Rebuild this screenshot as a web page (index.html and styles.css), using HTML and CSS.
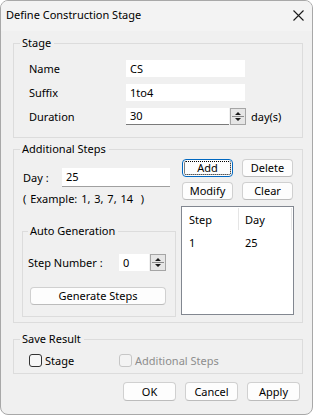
FILE: index.html
```html
<!DOCTYPE html>
<html lang="en">
<head>
  <meta charset="UTF-8" />
  <title>Define Construction Stage</title>
  <link rel="stylesheet" href="styles.css">
</head>
<body>
  <div class="window">
    <div class="titlebar">
      <span class="title">Define Construction Stage</span>
      <svg class="close" width="11" height="11" viewBox="0 0 11 11">
        <path d="M0.5 0.5 L10.5 10.5 M10.5 0.5 L0.5 10.5" stroke="#1a1a1a" stroke-width="1.1" fill="none"/>
      </svg>
    </div>

    <div class="content">
      <fieldset class="group">
        <legend>Stage</legend>
        <div class="stage-body">
          <div class="row"><span class="label">Name</span><span class="edit wide">CS</span></div>
          <div class="row"><span class="label">Suffix</span><span class="edit wide">1to4</span></div>
          <div class="row">
            <span class="label">Duration</span>
            <span class="edit spin-edit">30</span>
            <span class="spinner">
              <svg width="16" height="17" viewBox="0 0 16 17">
                <path d="M5 7 L8 4 L11 7 Z M5 10 L8 13 L11 10 Z" fill="#1a1a1a"/>
                <path d="M2 8.5 H14" stroke="#8a8a8a" stroke-width="1"/>
              </svg>
            </span>
            <span class="unit">day(s)</span>
          </div>
        </div>
      </fieldset>

      <fieldset class="group steps">
        <legend>Additional Steps</legend>
        <div class="steps-body">
          <div class="steps-left">
            <div class="day-row"><span class="day-label">Day :</span><span class="edit day-edit">25</span></div>
            <div class="example">( Example: 1, 3, 7, 14 &nbsp;)</div>
            <fieldset class="group auto">
              <legend>Auto Generation</legend>
              <div class="auto-body">
                <div class="num-row">
                  <span class="num-label">Step Number :</span>
                  <span class="edit num-edit">0</span>
                  <span class="spinner">
                    <svg width="16" height="17" viewBox="0 0 16 17">
                      <path d="M5 7 L8 4 L11 7 Z M5 10 L8 13 L11 10 Z" fill="#1a1a1a"/>
                      <path d="M2 8.5 H14" stroke="#8a8a8a" stroke-width="1"/>
                    </svg>
                  </span>
                </div>
                <div class="btn gen">Generate Steps</div>
              </div>
            </fieldset>
          </div>
          <div class="steps-right">
            <div class="btn-grid">
              <div class="btn focused">Add</div>
              <div class="btn">Delete</div>
              <div class="btn">Modify</div>
              <div class="btn">Clear</div>
            </div>
            <div class="list">
              <div class="list-head">
                <span class="col col-step">Step</span>
                <span class="col col-day">Day</span>
              </div>
              <div class="list-row">
                <span class="col col-step">1</span>
                <span class="col col-day">25</span>
              </div>
            </div>
          </div>
        </div>
      </fieldset>

      <fieldset class="group save">
        <legend>Save Result</legend>
        <div class="checks">
          <span class="check first"><span class="box"></span>Stage</span>
          <span class="check disabled"><span class="box"></span>Additional Steps</span>
        </div>
      </fieldset>

      <div class="actions">
        <div class="btn action">OK</div>
        <div class="btn action">Cancel</div>
        <div class="btn action">Apply</div>
      </div>
    </div>
  </div>
</body>
</html>
```

FILE: styles.css
```css
* { box-sizing: border-box; }
body { margin: 0; background: #ffffff; font-family: "Noto Sans", sans-serif; font-size: 11px; color: #000; }

.window { width: 313px; height: 415px; background: #f0f0f0; border: 1px solid #a8a8a8; border-radius: 8px; overflow: hidden; }
.titlebar { height: 30px; display: flex; align-items: center; justify-content: space-between; padding: 0 8px 3px 5px; background: #f3f3f3; }
.title { line-height: 16px; }
.close { display: block; margin-top: 1px; }

.content { padding: 4px 9px 0 12px; }

.group { margin: 0; padding: 0; border: 1px solid #dcdcdc; min-width: 0; }
.group legend { margin-left: 6px; padding: 0 3px 0 2px; line-height: 16px; }

.stage-body { padding: 9px 0 12px 15px; }
.row { display: flex; align-items: center; height: 17px; }
.row + .row { margin-top: 7px; }
.label { width: 97px; }
.edit { display: flex; align-items: center; height: 17px; background: #fff; padding-left: 4px; line-height: 16px; }
.wide { width: 119px; }
.spin-edit { width: 103px; border-bottom: 1px solid #7a7a7a; }
.spinner { display: block; width: 16px; height: 17px; margin-left: 1px; background: #e6e6e6; border: 1px solid #a5a5a5; }
.spinner svg { display: block; margin: -1px; }
.unit { margin-left: 5px; }

.steps { margin-top: 3px; }
.steps-body { display: flex; gap: 5px; padding: 2px 7px 5px 8px; }
.steps-left { width: 154px; }
.day-row { display: flex; align-items: center; margin-top: 9px; }
.day-label { width: 40px; padding-left: 1px; }
.day-edit { width: 108px; height: 19px; border-bottom: 1px solid #a0a0a0; }
.example { line-height: 16px; margin-top: 4px; padding-left: 1px; word-spacing: 1px; }

.auto { margin-top: 16px; }
.auto legend { margin-left: 5px; }
.auto-body { padding: 15px 9px 11px 5px; }
.num-row { display: flex; align-items: center; }
.num-label { width: 91px; }
.num-edit { width: 30px; height: 17px; }
.gen { margin: 16px 0 0 2px; height: 15px; }

.steps-right { width: 113px; }
.btn-grid { display: grid; grid-template-columns: 51px 51px; column-gap: 9px; row-gap: 5px; margin: 0 1px; }

.btn { display: flex; align-items: center; justify-content: center; height: 18px; background: #fdfdfd; border: 1px solid #d0d0d0; border-bottom-color: #bcbcbc; border-radius: 4px; line-height: 16px; }
.btn.focused { border: 1px solid #0067c0; outline: 1px dotted #000; outline-offset: -3px; }

.list { margin-top: 6px; height: 109px; background: #fff; border: 1px solid #828790; }
.list-head { display: flex; height: 24px; align-items: center; }
.list-head .col { height: 22px; display: flex; align-items: center; border-right: 1px solid #e5e5e5; }
.col { display: block; }
.col-step { width: 57px; padding-left: 7px; }
.col-day { width: 53px; padding-left: 6px; }
.list-row { display: flex; height: 20px; align-items: center; margin-top: 1px; }

.save { margin-top: 8px; }
.checks { display: flex; align-items: center; height: 16px; margin: 5px 0 5px 15px; }
.check { display: flex; align-items: center; gap: 3px; }
.check.first { width: 90px; }
.box { display: block; width: 13px; height: 13px; border: 1px solid #333; border-radius: 3px; background: #f7f7f7; }
.check.disabled { color: #8d8d8d; }
.check.disabled .box { border-color: #c6c6c6; background: #f3f3f3; }

.actions { display: flex; justify-content: flex-end; gap: 9px; margin: 8px 3px 0 0; }
.action { width: 53px; height: 19px; }
```
